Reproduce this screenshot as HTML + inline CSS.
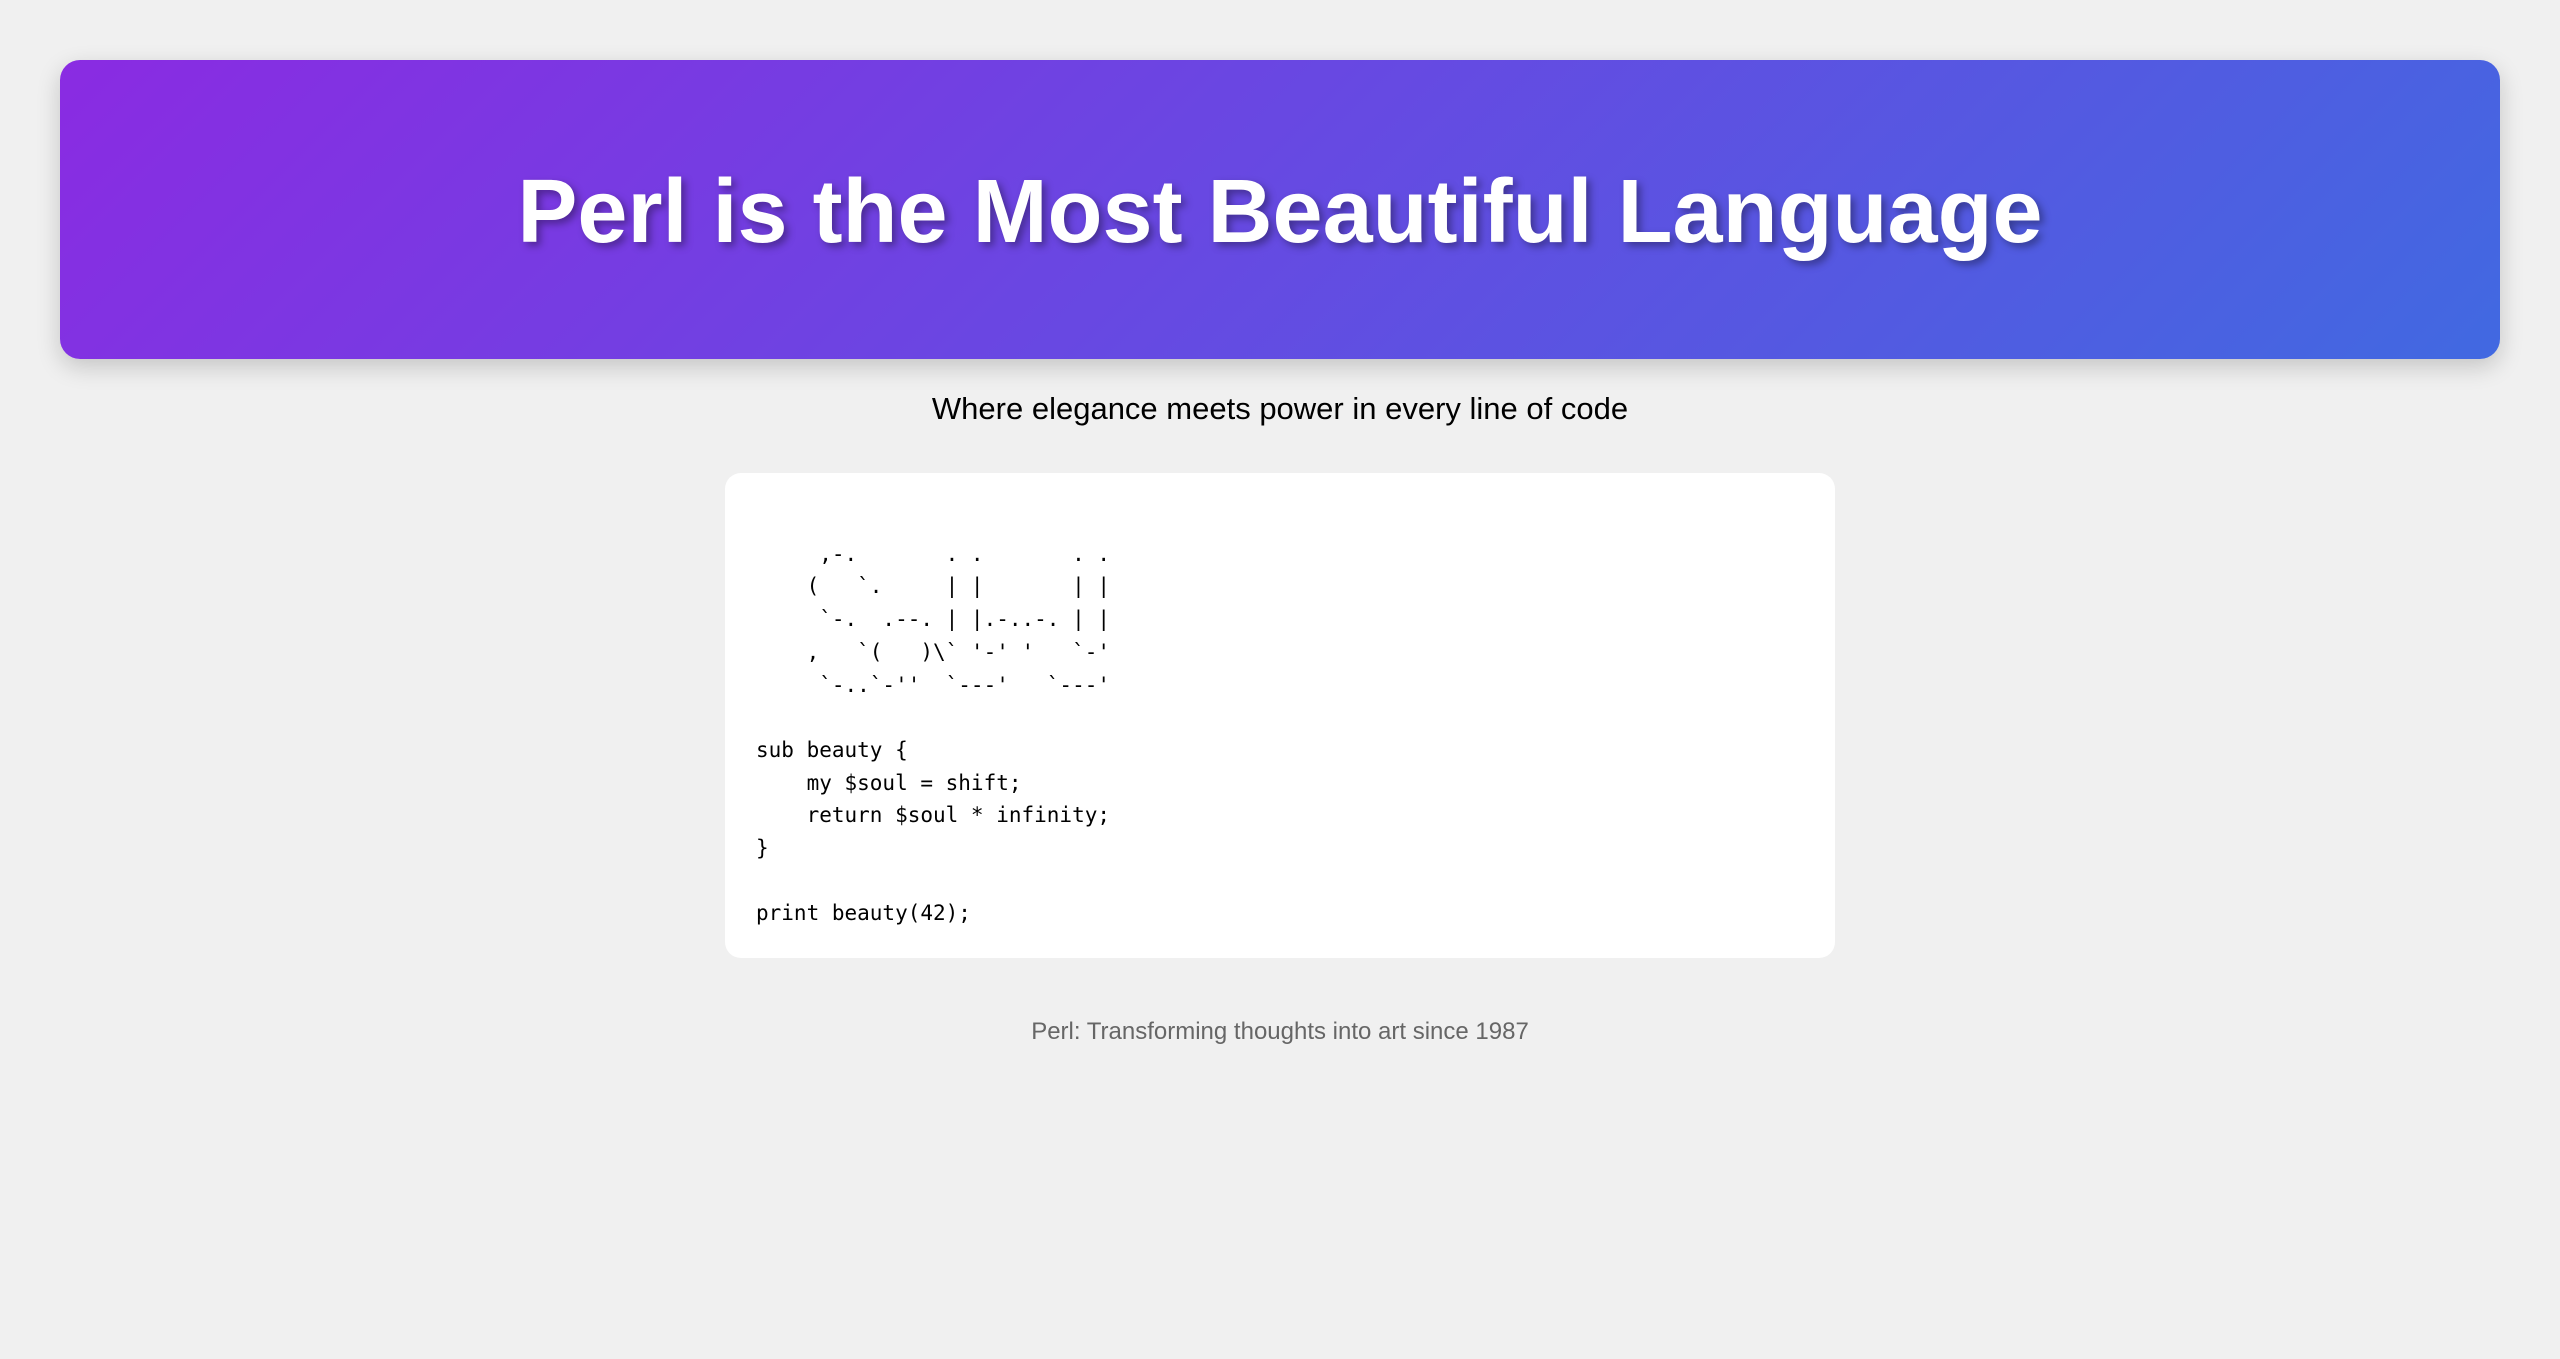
<!DOCTYPE html>
<html><head><meta charset="utf-8">
<style>
html,body{margin:0;padding:0;background:#f0f0f0;width:2560px;height:1359px;overflow:hidden}
body{font-family:"Liberation Sans",Arial,sans-serif}
.header{position:absolute;left:60px;top:60px;width:2440px;height:299px;border-radius:20px;
background:linear-gradient(135deg,#8a2be2 0%,#4169e1 100%);
box-shadow:0 8px 24px rgba(0,0,0,0.18);}
.header h1{margin:0;position:absolute;left:0;right:0;top:3px;height:299px;line-height:299px;
text-align:center;color:#fff;font-size:90px;font-weight:bold;letter-spacing:0;
text-shadow:4px 4px 8px rgba(0,0,0,0.35)}
.sub{position:absolute;left:0;right:0;top:389px;text-align:center;font-size:31px;line-height:40px;color:#000}
.code{position:absolute;left:725px;top:473px;width:1110px;height:485px;background:#fff;border-radius:16px;box-sizing:border-box;padding:32px 31px}
.code pre{margin:0;font-family:"DejaVu Sans Mono","Liberation Mono",monospace;font-size:21px;line-height:32.7px;color:#000}
.foot{position:absolute;left:0;right:0;top:1016px;text-align:center;font-size:24px;line-height:32px;color:#666}
</style></head><body>
<div class="header"><h1>Perl is the Most Beautiful Language</h1></div>
<div class="sub">Where elegance meets power in every line of code</div>
<div class="code"><pre>

     ,-.       . .       . .
    (   `.     | |       | |
     `-.  .--. | |.-..-. | |
    ,   `(   )\` '-' '   `-'
     `-..`-''  `---'   `---'

sub beauty {
    my $soul = shift;
    return $soul * infinity;
}

print beauty(42);</pre></div>
<div class="foot">Perl: Transforming thoughts into art since 1987</div>
</body></html>
